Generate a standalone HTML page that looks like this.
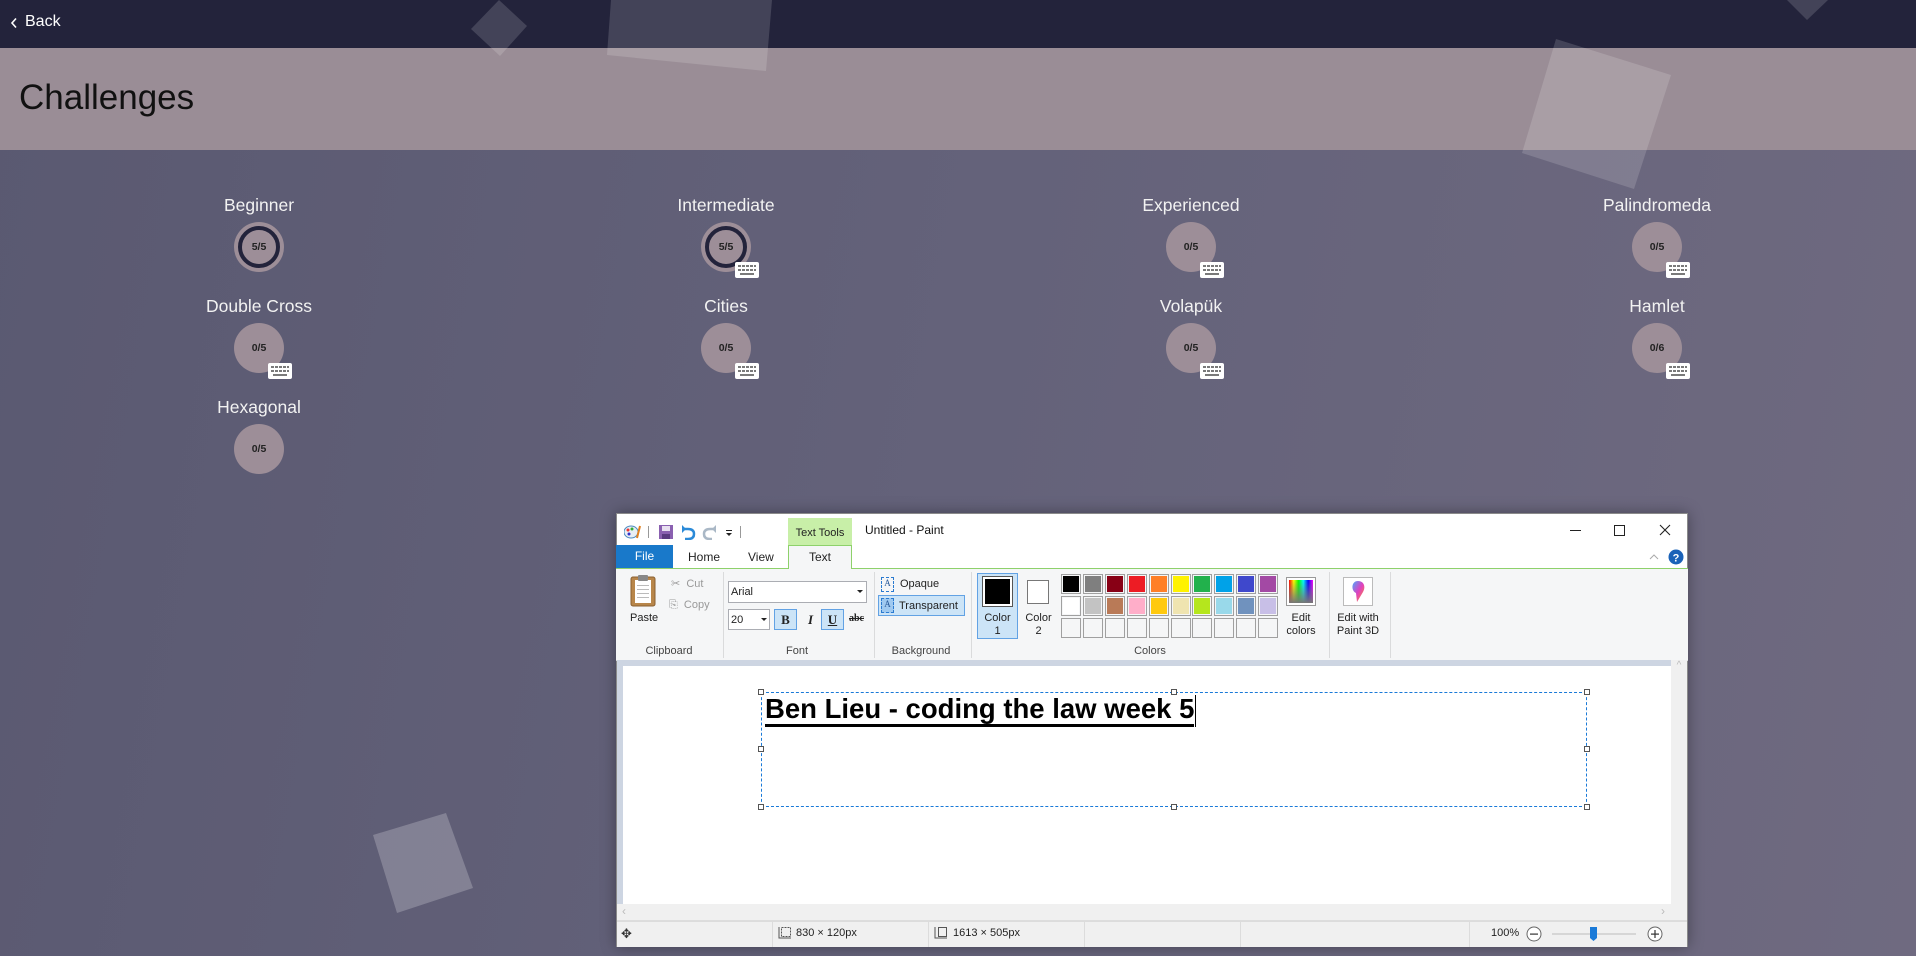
<!DOCTYPE html>
<html><head><meta charset="utf-8"><style>
*{margin:0;padding:0;box-sizing:border-box}
body{width:1916px;height:956px;overflow:hidden;position:relative;font-family:"Liberation Sans",sans-serif;background:linear-gradient(100deg,#5a5971 0%,#64627a 50%,#6f6a80 100%)}
.a{position:absolute}
.top{left:0;top:0;width:1916px;height:48px;background:#23233b}
.hdr{left:0;top:48px;width:1916px;height:102px;background:#9a8d96}
.ttl{position:absolute;color:#f2f2f2;font-size:17.5px;text-align:center;width:200px;line-height:20px}
.c{position:absolute;width:50px;height:50px;border-radius:50%;background:#9d8e98;font-size:10.5px;font-weight:bold;color:#222;text-align:center;line-height:50px}
.c.done::after{content:"";position:absolute;left:4px;top:4px;width:42px;height:42px;border-radius:50%;border:4px solid #23233b;box-sizing:border-box}
.w{font-family:"Liberation Sans",sans-serif;color:#222;font-size:12px}
.sw{position:absolute;width:20px;height:20px;border:1px solid #a0a0a0;background:#f5f6f7}
.sw b{position:absolute;left:1px;top:1px;right:1px;bottom:1px}
.lbl{position:absolute;font-size:11px;color:#444;text-align:center}
.sep{position:absolute;top:572px;width:1px;height:86px;background:#dadbdc}
.ssep{position:absolute;top:922px;width:1px;height:25px;background:#dcdcdc}
</style></head><body>
<div class="a top"></div>
<div class="a hdr"></div>
<svg class="a" style="left:0;top:0" width="1916" height="956">
<g fill="rgba(255,255,255,0.15)">
<polygon points="499,0 527,26 500,56 471,29"/>
<polygon points="611,0 772,0 766,71 607,55"/>
<polygon points="1556,39 1671,75 1634,189 1522,153"/>
<polygon points="1787,0 1828,0 1807,20"/>
</g>
<polygon fill="rgba(255,255,255,0.22)" points="373,835 446,813 473,888 397,913"/>
</svg>
<svg class="a" style="left:10px;top:17px" width="8" height="12"><path d="M6 1.5 L2 6 L6 10.5" stroke="#fff" stroke-width="1.6" fill="none"/></svg>
<div class="a" style="left:25px;top:13px;color:#fff;font-size:16px">Back</div>
<div class="a" style="left:19px;top:78px;font-size:35px;color:#111">Challenges</div>

<div class="ttl" style="left:159px;top:195px">Beginner</div>
<div class="c done" style="left:234px;top:222px">5/5</div>
<div class="ttl" style="left:626px;top:195px">Intermediate</div>
<div class="c done" style="left:701px;top:222px">5/5</div>
<div class="ttl" style="left:1091px;top:195px">Experienced</div>
<div class="c" style="left:1166px;top:222px">0/5</div>
<div class="ttl" style="left:1557px;top:195px">Palindromeda</div>
<div class="c" style="left:1632px;top:222px">0/5</div>

<div class="ttl" style="left:159px;top:296px">Double Cross</div>
<div class="c" style="left:234px;top:323px">0/5</div>
<div class="ttl" style="left:626px;top:296px">Cities</div>
<div class="c" style="left:701px;top:323px">0/5</div>
<div class="ttl" style="left:1091px;top:296px">Volapük</div>
<div class="c" style="left:1166px;top:323px">0/5</div>
<div class="ttl" style="left:1557px;top:296px">Hamlet</div>
<div class="c" style="left:1632px;top:323px">0/6</div>

<div class="ttl" style="left:159px;top:397px">Hexagonal</div>
<div class="c" style="left:234px;top:424px">0/5</div>

<svg width="0" height="0" style="position:absolute"><defs><g id="k"><rect width="24" height="16" rx="2" fill="#fff"/><g fill="#7a7a7a"><rect x="3" y="3" width="3" height="2"/><rect x="7" y="3" width="3" height="2"/><rect x="11" y="3" width="3" height="2"/><rect x="15" y="3" width="3" height="2"/><rect x="19" y="3" width="2" height="2"/><rect x="3" y="7" width="3" height="2"/><rect x="7" y="7" width="3" height="2"/><rect x="11" y="7" width="3" height="2"/><rect x="15" y="7" width="3" height="2"/><rect x="19" y="7" width="2" height="2"/><rect x="5" y="11" width="14" height="2"/></g></g></defs></svg>
<svg class="a" style="left:735px;top:262px" width="24" height="16"><use href="#k"/></svg>
<svg class="a" style="left:1200px;top:262px" width="24" height="16"><use href="#k"/></svg>
<svg class="a" style="left:1666px;top:262px" width="24" height="16"><use href="#k"/></svg>
<svg class="a" style="left:268px;top:363px" width="24" height="16"><use href="#k"/></svg>
<svg class="a" style="left:735px;top:363px" width="24" height="16"><use href="#k"/></svg>
<svg class="a" style="left:1200px;top:363px" width="24" height="16"><use href="#k"/></svg>
<svg class="a" style="left:1666px;top:363px" width="24" height="16"><use href="#k"/></svg>

<div class="a w" style="left:616px;top:513px;width:1072px;height:434px;background:#fff;box-shadow:0 0 14px rgba(0,0,0,0.35);border:1px solid #8a8a8a"></div>
<div class="a w" style="left:616px;top:513px;width:1072px;height:434px">
 <svg class="a" style="left:8px;top:11px" width="130" height="16">
  <ellipse cx="7" cy="8" rx="7" ry="6" fill="#e8eef4" stroke="#4a8ac0"/>
  <circle cx="4" cy="6" r="1.5" fill="#e33"/><circle cx="8" cy="5" r="1.5" fill="#3a3"/><circle cx="5" cy="10" r="1.5" fill="#33c"/>
  <path d="M13 14 L16 2" stroke="#e08020" stroke-width="2"/>
  <rect x="24" y="2" width="1" height="12" fill="#999"/>
  <rect x="35" y="1" width="14" height="14" fill="#8a60b0"/><rect x="38" y="2" width="8" height="5" fill="#e8e0f0"/><rect x="38" y="10" width="8" height="5" fill="#5a3a80"/>
  <path d="M59 5 L64 5 Q70 5 70 10 Q70 15 64 15 L61 15" stroke="#2b8ad8" stroke-width="2.5" fill="none"/><path d="M58 1 L58 9 L62 5Z" fill="#2b8ad8"/>
  <path d="M91 5 L86 5 Q80 5 80 10 Q80 15 86 15 L88 15" stroke="#aab8c6" stroke-width="2.5" fill="none"/><path d="M92 1 L92 9 L88 5Z" fill="#aab8c6"/>
  <rect x="102" y="6" width="6" height="1" fill="#222"/><path d="M102 9 L108 9 L105 12Z" fill="#222"/>
  <rect x="116" y="2" width="1" height="12" fill="#999"/>
 </svg>
 <div class="a" style="left:172px;top:5px;width:64px;height:27px;background:#c8efa8;font-size:11px;text-align:center;line-height:30px">Text Tools</div>
 <div class="a" style="left:249px;top:10px;font-size:12px;color:#111">Untitled - Paint</div>
 <svg class="a" style="left:950px;top:8px" width="120" height="20">
  <rect x="4" y="9" width="11" height="1" fill="#222"/>
  <rect x="48.5" y="4.5" width="10" height="10" fill="none" stroke="#222"/>
  <path d="M94 4 L104 14 M104 4 L94 14" stroke="#222" stroke-width="1.1"/>
 </svg>
 <div class="a" style="left:0;top:32px;width:57px;height:23px;background:#1979ca;color:#fff;text-align:center;line-height:23px;font-size:12px">File</div>
 <div class="a" style="left:72px;top:37px;font-size:12px">Home</div>
 <div class="a" style="left:132px;top:37px;font-size:12px">View</div>
 <div class="a" style="left:172px;top:32px;width:64px;height:24px;background:#f5f6f7;border:1px solid #8ed16b;border-bottom:none;text-align:center;line-height:22px;font-size:12px">Text</div>
 <div class="a" style="left:0;top:55px;width:172px;height:1px;background:#8ed16b"></div>
 <div class="a" style="left:236px;top:55px;width:836px;height:1px;background:#8ed16b"></div>
 <svg class="a" style="left:1030px;top:36px" width="40" height="18"><path d="M4 10 L8 6 L12 10" stroke="#aaa" fill="none"/><circle cx="30" cy="8" r="7.5" fill="#1a62b8"/><text x="30" y="12.5" font-size="11" font-weight="bold" fill="#fff" text-anchor="middle" font-family="Liberation Sans">?</text></svg>
 <div class="a" style="left:0;top:56px;width:1072px;height:92px;background:#f5f6f7;border-bottom:1px solid #dadbdc"></div>
</div>
<div class="w">
<svg class="a" style="left:630px;top:574px" width="28" height="34"><rect x="1" y="3" width="24" height="29" rx="2" fill="#b8864a" stroke="#8a6030"/><rect x="5" y="6" width="16" height="23" fill="#fff"/><rect x="8" y="1" width="10" height="6" rx="1" fill="#888"/><g fill="#bbb"><rect x="7" y="11" width="12" height="1"/><rect x="7" y="15" width="12" height="1"/><rect x="7" y="19" width="12" height="1"/><rect x="7" y="23" width="12" height="1"/></g></svg>
<div class="a" style="left:630px;top:612px;font-size:11px">Paste</div>
<div class="a" style="left:671px;top:577px;font-size:11px;color:#999">✂&nbsp; Cut</div>
<div class="a" style="left:669px;top:599px;font-size:11px;color:#999">⎘&nbsp; Copy</div>
<div class="lbl" style="left:629px;top:645px;width:80px">Clipboard</div>
<div class="sep" style="left:723px"></div>
<div class="a" style="left:728px;top:581px;width:139px;height:22px;background:#fff;border:1px solid #abadb3;font-size:11px;padding:4px 2px">Arial</div>
<div class="a" style="left:857px;top:590px;border:3px solid transparent;border-top:3px solid #222"></div>
<div class="a" style="left:728px;top:609px;width:42px;height:21px;background:#fff;border:1px solid #abadb3;font-size:11px;padding:4px 2px">20</div>
<div class="a" style="left:761px;top:618px;border:3px solid transparent;border-top:3px solid #222"></div>
<div class="a" style="left:774px;top:609px;width:23px;height:21px;background:#cce4f7;border:1px solid #62a2e4;font:bold 13px 'Liberation Serif',serif;text-align:center;line-height:19px">B</div>
<div class="a" style="left:799px;top:609px;width:23px;height:21px;font:italic bold 13px 'Liberation Serif',serif;text-align:center;line-height:21px">I</div>
<div class="a" style="left:821px;top:609px;width:23px;height:21px;background:#cce4f7;border:1px solid #62a2e4;font:bold 13px 'Liberation Serif',serif;text-align:center;line-height:19px;text-decoration:underline">U</div>
<div class="a" style="left:849px;top:613px;font:bold 10px 'Liberation Serif',serif;text-decoration:line-through">abc</div>
<div class="lbl" style="left:757px;top:645px;width:80px">Font</div>
<div class="sep" style="left:874px"></div>
<div class="a" style="left:881px;top:577px;width:13px;height:15px;border:1px dashed #2a7ad0;font:9px 'Liberation Serif',serif;text-align:center;color:#2a5a9a">A</div>
<div class="a" style="left:900px;top:578px;font-size:11px">Opaque</div>
<div class="a" style="left:878px;top:595px;width:87px;height:21px;background:#cce4f7;border:1px solid #62a2e4"></div>
<div class="a" style="left:881px;top:598px;width:13px;height:15px;border:1px dashed #2a7ad0;font:9px 'Liberation Serif',serif;text-align:center;color:#2a5a9a;background:#9fc9f0">A</div>
<div class="a" style="left:899px;top:600px;font-size:11px">Transparent</div>
<div class="lbl" style="left:881px;top:645px;width:80px">Background</div>
<div class="sep" style="left:971px"></div>
<div class="a" style="left:977px;top:573px;width:41px;height:66px;background:#cce4f7;border:1px solid #62a2e4"></div>
<div class="a" style="left:982px;top:576px;width:31px;height:31px;border:1px solid #555;background:#fff;padding:2px"><div style="width:100%;height:100%;background:#000"></div></div>
<div class="lbl" style="left:977px;top:612px;width:41px;color:#222;line-height:13px">Color<br>1</div>
<div class="a" style="left:1027px;top:580px;width:22px;height:24px;border:1px solid #777;background:#fff"></div>
<div class="lbl" style="left:1018px;top:612px;width:41px;color:#222;line-height:13px">Color<br>2</div>
<div class="sw" style="left:1061px;top:574px"><b style="background:#000"></b></div>
<div class="sw" style="left:1083px;top:574px"><b style="background:#7f7f7f"></b></div>
<div class="sw" style="left:1105px;top:574px"><b style="background:#880015"></b></div>
<div class="sw" style="left:1127px;top:574px"><b style="background:#ed1c24"></b></div>
<div class="sw" style="left:1149px;top:574px"><b style="background:#ff7f27"></b></div>
<div class="sw" style="left:1171px;top:574px"><b style="background:#fff200"></b></div>
<div class="sw" style="left:1192px;top:574px"><b style="background:#22b14c"></b></div>
<div class="sw" style="left:1214px;top:574px"><b style="background:#00a2e8"></b></div>
<div class="sw" style="left:1236px;top:574px"><b style="background:#3f48cc"></b></div>
<div class="sw" style="left:1258px;top:574px"><b style="background:#a349a4"></b></div>
<div class="sw" style="left:1061px;top:596px"><b style="background:#fff"></b></div>
<div class="sw" style="left:1083px;top:596px"><b style="background:#c3c3c3"></b></div>
<div class="sw" style="left:1105px;top:596px"><b style="background:#b97a57"></b></div>
<div class="sw" style="left:1127px;top:596px"><b style="background:#ffaec9"></b></div>
<div class="sw" style="left:1149px;top:596px"><b style="background:#ffc90e"></b></div>
<div class="sw" style="left:1171px;top:596px"><b style="background:#efe4b0"></b></div>
<div class="sw" style="left:1192px;top:596px"><b style="background:#b5e61d"></b></div>
<div class="sw" style="left:1214px;top:596px"><b style="background:#99d9ea"></b></div>
<div class="sw" style="left:1236px;top:596px"><b style="background:#7092be"></b></div>
<div class="sw" style="left:1258px;top:596px"><b style="background:#c8bfe7"></b></div>
<div class="sw" style="left:1061px;top:618px"></div><div class="sw" style="left:1083px;top:618px"></div><div class="sw" style="left:1105px;top:618px"></div><div class="sw" style="left:1127px;top:618px"></div><div class="sw" style="left:1149px;top:618px"></div><div class="sw" style="left:1171px;top:618px"></div><div class="sw" style="left:1192px;top:618px"></div><div class="sw" style="left:1214px;top:618px"></div><div class="sw" style="left:1236px;top:618px"></div><div class="sw" style="left:1258px;top:618px"></div>
<div class="a" style="left:1286px;top:577px;width:30px;height:29px;border:1px solid #999;background:#fff;padding:2px"><div style="width:100%;height:100%;background:linear-gradient(to bottom,transparent,#777),linear-gradient(to right,#f00,#ff0,#0f0,#0ff,#00f,#f0f)"></div></div>
<div class="lbl" style="left:1280px;top:612px;width:42px;color:#222;line-height:13px">Edit<br>colors</div>
<div class="lbl" style="left:1100px;top:645px;width:100px">Colors</div>
<div class="sep" style="left:1329px"></div>
<div class="a" style="left:1343px;top:577px;width:30px;height:29px;border:1px solid #bbb;background:#fff"></div>
<svg class="a" style="left:1348px;top:579px" width="20" height="26"><defs><linearGradient id="g3" x1="0" y1="0" x2="1" y2="1"><stop offset="0" stop-color="#4aa8ff"/><stop offset=".5" stop-color="#e040c0"/><stop offset="1" stop-color="#ff9020"/></linearGradient></defs><path d="M10 2 C16 2 18 8 15 13 L9 23 L8 14 C3 12 3 2 10 2Z" fill="url(#g3)"/></svg>
<div class="lbl" style="left:1328px;top:612px;width:60px;color:#222;line-height:13px">Edit with<br>Paint 3D</div>
<div class="sep" style="left:1390px"></div>
</div>
<div class="a" style="left:617px;top:660px;width:1070px;height:244px;background:#cdd5e2"></div>
<div class="a" style="left:623px;top:666px;width:1048px;height:238px;background:#fff"></div>
<div class="a" style="left:1671px;top:660px;width:16px;height:244px;background:#f0f0f0;color:#bbb;font-size:10px;text-align:center">^</div>
<div class="a" style="left:617px;top:904px;width:1070px;height:17px;background:#f0f0f0;border-bottom:1px solid #ddd;color:#bbb;font-size:12px"><span style="position:absolute;left:5px;top:0">‹</span><span style="position:absolute;right:22px;top:0">›</span></div>
<div class="a" style="left:761px;top:692px;width:826px;height:115px;border:1px dashed #1a7ad8"></div>
<div class="a" style="left:758px;top:689px;width:6px;height:6px;border:1px solid #555;background:#fff"></div>
<div class="a" style="left:1171px;top:689px;width:6px;height:6px;border:1px solid #555;background:#fff"></div>
<div class="a" style="left:1584px;top:689px;width:6px;height:6px;border:1px solid #555;background:#fff"></div>
<div class="a" style="left:758px;top:746px;width:6px;height:6px;border:1px solid #555;background:#fff"></div>
<div class="a" style="left:1584px;top:746px;width:6px;height:6px;border:1px solid #555;background:#fff"></div>
<div class="a" style="left:758px;top:804px;width:6px;height:6px;border:1px solid #555;background:#fff"></div>
<div class="a" style="left:1171px;top:804px;width:6px;height:6px;border:1px solid #555;background:#fff"></div>
<div class="a" style="left:1584px;top:804px;width:6px;height:6px;border:1px solid #555;background:#fff"></div>
<div class="a" style="left:765px;top:694px;font:bold 27.5px 'Liberation Sans',sans-serif;color:#000;line-height:30px;white-space:nowrap;border-bottom:3px solid #000">Ben Lieu - coding the law week 5</div>
<div class="a" style="left:1195px;top:695px;width:1px;height:32px;background:#000"></div>
<div class="a" style="left:617px;top:921px;width:1070px;height:26px;background:#f0f0f0;border-top:1px solid #dcdcdc"></div>
<div class="a" style="left:621px;top:926px;font-size:13px;color:#333">✥</div>
<div class="ssep" style="left:772px"></div><div class="ssep" style="left:928px"></div><div class="ssep" style="left:1084px"></div><div class="ssep" style="left:1240px"></div><div class="ssep" style="left:1469px"></div>
<svg class="a" style="left:778px;top:926px" width="14" height="14"><rect x="3.5" y="1.5" width="9" height="9" fill="none" stroke="#555" stroke-dasharray="2 1"/><path d="M1 1 V12 H13" stroke="#555" fill="none"/></svg>
<div class="a" style="left:796px;top:927px;font-size:11px;color:#222">830 × 120px</div>
<svg class="a" style="left:934px;top:926px" width="14" height="14"><rect x="4.5" y="1.5" width="8" height="9" fill="none" stroke="#555"/><path d="M1 1 V12 H13" stroke="#555" fill="none"/></svg>
<div class="a" style="left:953px;top:927px;font-size:11px;color:#222">1613 × 505px</div>
<div class="a" style="left:1491px;top:927px;font-size:11px;color:#222">100%</div>
<svg class="a" style="left:1524px;top:925px" width="150" height="18"><circle cx="10" cy="9" r="7" fill="#fff" stroke="#666"/><rect x="6" y="8.5" width="8" height="1.2" fill="#333"/><rect x="28" y="8" width="84" height="2" fill="#d6d6d6"/><path d="M66 2 H73 V13 L69.5 16 L66 13Z" fill="#1a7ad8"/><circle cx="131" cy="9" r="7" fill="#fff" stroke="#666"/><rect x="127" y="8.5" width="8" height="1.2" fill="#333"/><rect x="130.4" y="5" width="1.2" height="8" fill="#333"/></svg>
</body></html>
